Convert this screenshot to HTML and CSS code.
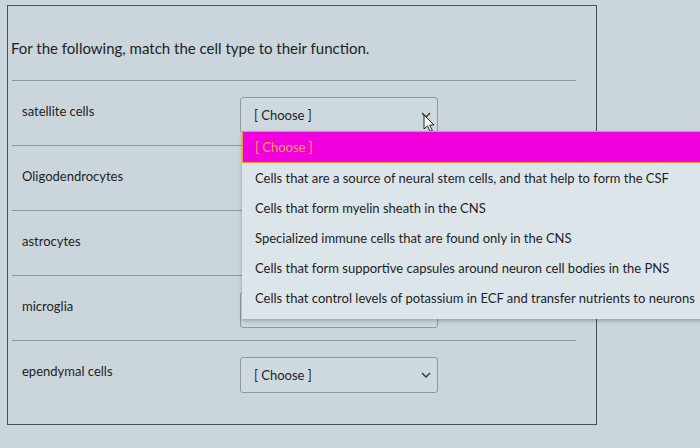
FILE: index.html
```html
<!DOCTYPE html>
<html lang="en">
<head>
    <meta charset="UTF-8">
    <meta name="viewport" content="width=device-width, initial-scale=1.0">
    <title>Match the cell type</title>
    <link rel="stylesheet" href="styles.css">
</head>
<body>
    <div class="question">
        <p class="prompt">For the following, match the cell type to their function.</p>
        <div class="rows">
            <div class="row">
                <span class="label">satellite cells</span>
                <div class="select open">
                    <span>[ Choose ]</span>
                    <span class="chevron">
                        <svg width="10" height="6" viewBox="0 0 10 6"><path d="M1 1l4 4 4-4" fill="none" stroke="#333" stroke-width="1.4"/></svg>
                    </span>
                    <svg class="cursor" width="12" height="18" viewBox="0 0 12 18"><path d="M1 1v14l3.5-3.2 2.6 5.6 2.2-1-2.6-5.4H11z" fill="#fff" stroke="#222" stroke-width="1"/></svg>
                </div>
            </div>
            <div class="row">
                <span class="label">Oligodendrocytes</span>
            </div>
            <div class="row">
                <span class="label">astrocytes</span>
            </div>
            <div class="row">
                <span class="label">microglia</span>
                <!-- covered by the open menu -->
                <div class="select"></div>
            </div>
            <div class="row">
                <span class="label">ependymal cells</span>
                <div class="select">
                    <span>[ Choose ]</span>
                    <span class="chevron">
                        <svg width="10" height="6" viewBox="0 0 10 6"><path d="M1 1l4 4 4-4" fill="none" stroke="#333" stroke-width="1.4"/></svg>
                    </span>
                </div>
            </div>
        </div>
    </div>

    <!-- open dropdown list of the first select -->
    <ul class="menu">
        <li class="active">[ Choose ]</li>
        <li>Cells that are a source of neural stem cells, and that help to form the CSF</li>
        <li>Cells that form myelin sheath in the CNS</li>
        <li>Specialized immune cells that are found only in the CNS</li>
        <li>Cells that form supportive capsules around neuron cell bodies in the PNS</li>
        <li>Cells that control levels of potassium in ECF and transfer nutrients to neurons</li>
    </ul>
</body>
</html>
```

FILE: styles.css
```css
body {
    margin: 0;
    padding-top: 5px;
    background: #cad6db;
    font-family: Lato, "Open Sans", sans-serif;
    color: #1e2224;
    height: 443px;
    overflow: hidden;
}

.question {
    margin-left: 7px;
    width: 590px;
    height: 420px;
    border: 1px solid #4a5256;
    box-sizing: border-box;
}

.prompt {
    margin: 0;
    padding: 32px 0 0 3px;
    font-size: 15px;
    line-height: 20px;
}

.rows {
    margin: 22px 20px 0 4px;
    border-top: 1px solid #8e999e;
}

.row {
    display: flex;
    align-items: flex-start;
    height: 65px;
    border-bottom: 1px solid #8e999e;
    box-sizing: border-box;
}

.row:last-child {
    border-bottom: none;
}

.label {
    width: 228px;
    padding: 22px 0 0 10px;
    box-sizing: border-box;
    font-size: 13px;
    line-height: 16px;
}

.select {
    position: relative;
    display: flex;
    align-items: center;
    justify-content: space-between;
    width: 198px;
    height: 36px;
    margin-top: 16px;
    padding: 0 6px 0 13px;
    box-sizing: border-box;
    border: 1px solid #8e999e;
    border-radius: 3px;
    background: #cdd9de;
    font-size: 13px;
}

.chevron {
    display: flex;
}

.cursor {
    position: absolute;
    right: 2px;
    top: 16px;
}

.menu {
    position: absolute;
    left: 242px;
    top: 131px;
    width: 470px;
    margin: 0;
    padding: 0 0 6px;
    list-style: none;
    background: #dce6ea;
    box-shadow: 0 2px 4px rgba(0, 0, 0, 0.25);
    font-size: 13px;
}

.menu li {
    height: 30px;
    line-height: 30px;
    padding-left: 13px;
    white-space: nowrap;
}

.menu li.active {
    height: 30px;
    background: #f000dc;
    color: #ffa04a;
    border: 1px solid #f09a3c;
    padding-left: 12px;
}
```
